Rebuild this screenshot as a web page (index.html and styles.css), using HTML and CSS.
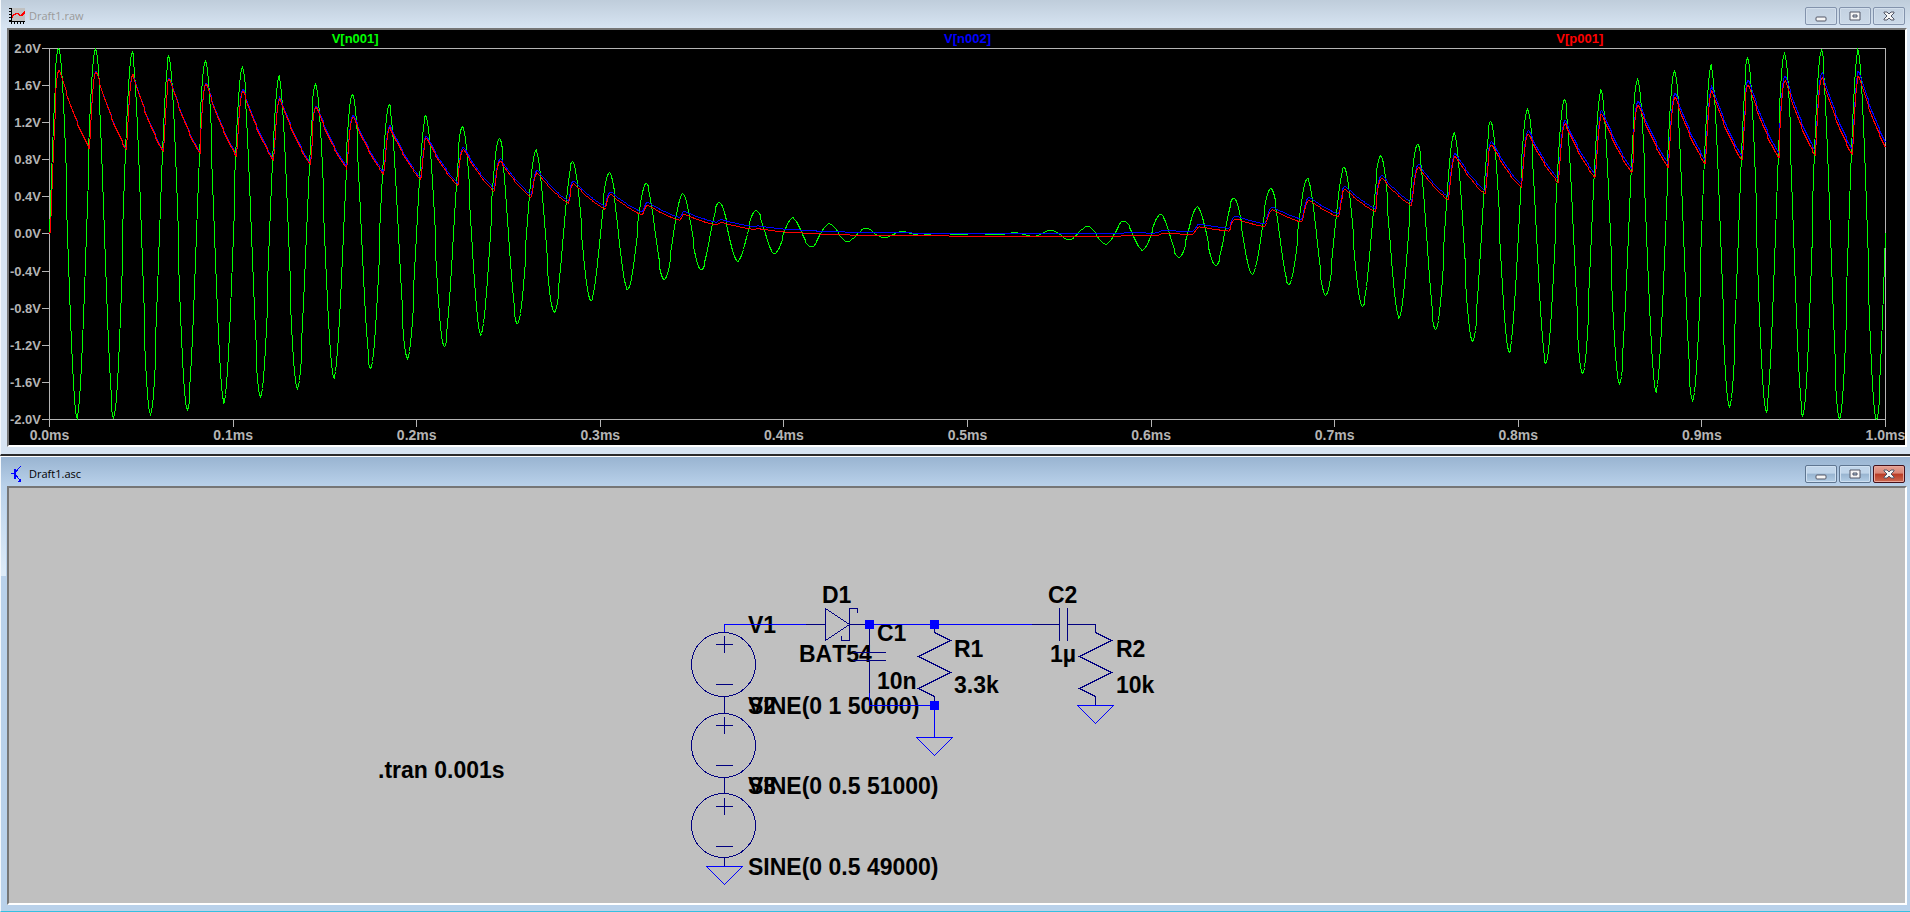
FILE: index.html
```html
<!DOCTYPE html>
<html lang="en">
<head>
<meta charset="utf-8">
<title>Draft1</title>
<link rel="stylesheet" href="styles.css">
</head>
<body>
<section class="window window-plot" aria-label="Draft1.raw">
  <header class="titlebar">
    <svg class="app-icon" width="16" height="16" viewBox="0 0 16 16" shape-rendering="crispEdges" aria-hidden="true">
      <path d="M2 0h14v13H2z" fill="#c0c0c0"/>
      <path d="M2 0h1v16H2zM0 13h16v1H0zM0 0h2v1H0zM0 3h2v1H0zM0 6h2v1H0zM0 9h2v1H0zM0 12h2v1H0zM5 14h1v2H5zM8 14h1v2H8zM11 14h1v2h-1zM14 14h1v2h-1z"/>
      <path d="M3 9.500L4 7.500L7 5.500L9 5.500L11 7.500L13 7L16 4" fill="none" stroke="#f00" stroke-width="1.500"/>
    </svg>
    <h1 class="title">Draft1.raw</h1>
    <div class="controls">
      <button class="ctl" type="button" aria-label="Minimize"><svg width="12" height="12" viewBox="0 0 12 12"><rect class="glyph" x="1" y="7" width="10" height="4" rx="1"/></svg></button>
      <button class="ctl" type="button" aria-label="Maximize"><svg width="12" height="12" viewBox="0 0 12 12"><path class="glyph" fill-rule="evenodd" d="M1 2h10v8H1zM4 5v2h4V5z"/></svg></button>
      <button class="ctl" type="button" aria-label="Close"><svg width="12" height="12" viewBox="0 0 12 12"><path class="glyph" d="M1 2h3l2 2 2-2h3v1L8 6l3 3v1H8L6 8l-2 2H1V9l3-3-3-3z"/></svg></button>
    </div>
  </header>
  <div class="client scope">
    <ul class="legend">
      <li class="legend-green">V[n001]</li>
      <li class="legend-blue">V[n002]</li>
      <li class="legend-red">V[p001]</li>
    </ul>
    <ol class="y-axis">
      <li>2.0V</li><li>1.6V</li><li>1.2V</li><li>0.8V</li><li>0.4V</li><li>0.0V</li>
      <li>-0.4V</li><li>-0.8V</li><li>-1.2V</li><li>-1.6V</li><li>-2.0V</li>
    </ol>
    <div class="plot" id="plot">
      <svg class="traces" role="img" aria-label="Node voltages over time">
        <path class="trace trace-green" id="trace-n001"/>
        <path class="trace trace-blue" id="trace-n002"/>
        <path class="trace trace-red" id="trace-p001"/>
      </svg>
    </div>
    <ol class="x-axis">
      <li>0.0ms</li><li>0.1ms</li><li>0.2ms</li><li>0.3ms</li><li>0.4ms</li><li>0.5ms</li>
      <li>0.6ms</li><li>0.7ms</li><li>0.8ms</li><li>0.9ms</li><li>1.0ms</li>
    </ol>
  </div>
</section>

<section class="window window-schematic" aria-label="Draft1.asc">
  <header class="titlebar">
    <svg class="app-icon" width="16" height="16" viewBox="0 0 16 16" shape-rendering="crispEdges" aria-hidden="true">
      <path d="M5 3h2v10H5z" fill="#00f"/>
      <path d="M2 7.500H5M7 5.500L11.500 0.500M7 9.500L12 15" fill="none" stroke="#00f"/>
      <path d="M12 12v4H9v-1l1-1z" fill="#00f"/>
    </svg>
    <h1 class="title">Draft1.asc</h1>
    <div class="controls">
      <button class="ctl" type="button" aria-label="Minimize"><svg width="12" height="12" viewBox="0 0 12 12"><rect class="glyph" x="1" y="7" width="10" height="4" rx="1"/></svg></button>
      <button class="ctl" type="button" aria-label="Maximize"><svg width="12" height="12" viewBox="0 0 12 12"><path class="glyph" fill-rule="evenodd" d="M1 2h10v8H1zM4 5v2h4V5z"/></svg></button>
      <button class="ctl ctl-close" type="button" aria-label="Close"><svg width="12" height="12" viewBox="0 0 12 12"><path class="glyph" d="M1 2h3l2 2 2-2h3v1L8 6l3 3v1H8L6 8l-2 2H1V9l3-3-3-3z"/></svg></button>
    </div>
  </header>
  <div class="client sheet">
    <svg class="schematic" role="img" aria-label="Envelope detector schematic">
      <g class="labels">
        <text x="813" y="115">D1</text>
        <text x="739" y="145">V1</text>
        <text x="790" y="174">BAT54</text>
        <text x="868" y="153">C1</text>
        <text x="868" y="201">10n</text>
        <text x="945" y="169">R1</text>
        <text x="945" y="205">3.3k</text>
        <text x="1039" y="115">C2</text>
        <text x="1041" y="174">1µ</text>
        <text x="1107" y="169">R2</text>
        <text x="1107" y="205">10k</text>
        <text x="739" y="226">V2</text>
        <text x="739" y="226">SINE(0 1 50000)</text>
        <text x="739" y="306">V3</text>
        <text x="739" y="306">SINE(0 0.5 51000)</text>
        <text x="739" y="387">SINE(0 0.5 49000)</text>
        <text x="369" y="290">.tran 0.001s</text>
      </g>
      <g class="part">
        <!-- voltage sources -->
        <path d="M715.500 136V144.500M715.500 208.500V225.500M715.500 289V305.500M715.500 369.500V378.500"/>
        <circle cx="714.500" cy="176.500" r="32"/>
        <circle cx="714.500" cy="257.500" r="32"/>
        <circle cx="714.500" cy="337.500" r="32"/>
        <path d="M707 156.500H724M715.500 148V165M707 196.500H724"/>
        <path d="M707 237.500H724M715.500 229V246M707 277.500H724"/>
        <path d="M707 318.500H724M715.500 310V327M707 358.500H724"/>
        <!-- Schottky diode -->
        <path d="M797 136.500H816.500M816.500 120.500V152.500L840.500 136.500ZM848.500 125V120.500H840.500V152.500H832.500V148M840.500 136.500H856"/>
        <!-- C1 -->
        <path d="M860.500 141V164.500M844 164.500H877M844 172.500H877M860.500 172.500V205"/>
        <!-- R1 -->
        <path d="M925.500 141V144.500L941.500 152.500L909.500 168.500L941.500 184.500L909.500 200.500L925.500 208.500V213"/>
        <!-- C2 -->
        <path d="M1023 136.500H1050.500M1050.500 120V153M1058.500 120V153M1058.500 136.500H1086.500"/>
        <!-- R2 -->
        <path d="M1086.500 136.500V144.500L1102.500 152.500L1070.500 168.500L1102.500 184.500L1070.500 200.500L1086.500 208.500V217.500"/>
      </g>
      <g class="wire">
        <path d="M715.500 144V136.500H797M856 136.500H1023M860.500 205V217.500H925.500V249.500"/>
        <path d="M697.500 378.500H733.500L715.500 396.500Z"/>
        <path d="M907.500 249.500H943.500L925.500 267.500Z"/>
        <path d="M1068.500 217.500H1104.500L1086.500 235.500Z"/>
      </g>
      <g class="node">
        <rect x="856" y="132" width="9" height="9"/>
        <rect x="921" y="132" width="9" height="9"/>
        <rect x="921" y="213" width="9" height="9"/>
      </g>
    </svg>
  </div>
</section>
<script src="traces.js"></script>
</body>
</html>
```

FILE: styles.css
```css
* {
  box-sizing: border-box;
}

body {
  margin: 0;
  height: 100vh;
  display: grid;
  grid-template-rows: minmax(0, 1fr) minmax(0, 1fr);
  overflow: hidden;
  background: #d7e4f2;
  font-family: "Liberation Sans", Arial, sans-serif;
}

.window {
  min-height: 0;
  display: flex;
  flex-direction: column;
  border-left: 1px solid #f4f8fc;
}

.window-plot {
  padding: 0 3px 7px 6px;
  border-bottom: 2px solid #2b2b2b;
  background: linear-gradient(#bfcddb, #d7e4f2 28px);
}

.window-schematic {
  padding: 0 3px 6px 6px;
  border-top: 1px solid #fff;
  border-bottom: 1px solid #36bfe0;
  background:
    linear-gradient(#b9d1ea, #dfecf8) 0 29px / 5px 90px no-repeat,
    linear-gradient(#99b4d1, #b9d1ea 29px);
}

.titlebar {
  flex: none;
  display: flex;
  align-items: center;
  height: 28px;
  padding: 4px 2px 0;
}

.window-schematic .titlebar {
  height: 29px;
  padding-top: 5px;
}

.app-icon {
  flex: none;
}

.title {
  flex: 1;
  margin: 0 0 0 4px;
  font: 400 11px/16px "Open Sans", "Noto Sans", sans-serif;
  color: #000;
}

.window-plot .title {
  color: #9a9a9a;
}

.controls {
  display: flex;
  gap: 2px;
}

.ctl {
  display: flex;
  align-items: center;
  justify-content: center;
  width: 32px;
  height: 18px;
  padding: 0;
  border: 1px solid #8393ac;
  border-radius: 2px;
  background: linear-gradient(#c3d1e1, #cbd9e8);
  box-shadow: inset 0 0 0 1px #d3dfec;
}

.window-schematic .ctl {
  border-color: #5f7691;
  background: linear-gradient(#c0d5ea 45%, #98b4d0 50%, #b4cee6);
  box-shadow: inset 0 0 0 1px #cfe0f1;
}

.window-schematic .ctl-close {
  border-color: #43101a;
  background: linear-gradient(#e5a194, #d98677 45%, #b83a25 50%, #cc6a52);
  box-shadow: inset 0 0 0 1px #e9a79b;
}

.glyph {
  fill: #f6f6f6;
  stroke: #535666;
  stroke-width: 1;
}

.client {
  flex: 1;
  min-height: 0;
  border: 2px solid;
  border-color: #767676 #fff #fff #767676;
}

.scope {
  display: grid;
  grid-template: 18px minmax(0, 1fr) 25px / 40px minmax(0, 1fr) 19px;
  background: #000;
  color: #b4b4b4;
  font-size: 13px;
  font-weight: 700;
}

.legend,
.y-axis,
.x-axis {
  margin: 0;
  padding: 0;
  list-style: none;
}

.legend {
  grid-area: 1 / 2;
  display: flex;
  line-height: 18px;
}

.legend li {
  flex: 1;
  text-align: center;
}

.legend-green {
  color: #0f0;
}

.legend-blue {
  color: #00f;
}

.legend-red {
  color: #f00;
}

.y-axis {
  grid-area: 2 / 1;
  display: flex;
  flex-direction: column;
  justify-content: space-between;
}

.y-axis li {
  display: flex;
  align-items: center;
  justify-content: flex-end;
  height: 1px;
}

.y-axis li::after {
  content: "";
  width: 7px;
  height: 1px;
  margin-left: 1px;
  background: #b4b4b4;
}

.plot {
  grid-area: 2 / 2;
  box-shadow: inset 0 0 0 1px #b4b4b4;
}

.traces {
  display: block;
  width: 100%;
  height: 100%;
}

.trace {
  fill: none;
  stroke-width: 1;
  shape-rendering: crispEdges;
}

.trace-green {
  stroke: #0f0;
}

.trace-blue {
  stroke: #00f;
}

.trace-red {
  stroke: #f00;
}

.x-axis {
  grid-area: 3 / 2;
  display: flex;
  justify-content: space-between;
}

.x-axis li {
  display: flex;
  flex-direction: column;
  align-items: center;
  width: 1px;
  line-height: 15px;
  font-size: 14px;
  white-space: nowrap;
}

.x-axis li::before {
  content: "";
  width: 1px;
  height: 7px;
  margin-bottom: 1px;
  background: #b4b4b4;
}

.sheet {
  background: #c0c0c0;
}

.schematic {
  display: block;
  width: 100%;
  height: 100%;
}

.labels {
  font-size: 23px;
  font-weight: 700;
  font-kerning: none;
  fill: #000;
}

.part,
.wire {
  fill: none;
  stroke: #000080;
  stroke-width: 1;
  shape-rendering: crispEdges;
}

.wire {
  stroke: #00f;
}

.node {
  fill: #00f;
}
```

FILE: traces.js
```js
// Transient analysis of the envelope detector: three series sine sources,
// Schottky diode, C1 || R1, then C2 in series with R2.
const SPAN = 0.001;
const STEP = 2e-8;
const EVERY = 25;
const C1 = 10e-9, R1 = 3300, C2 = 1e-6, R2 = 10000;
const IS = 1e-7, VT = 0.02585;

function source(t) {
  const w = 2 * Math.PI * t;
  return Math.sin(w * 50000) + 0.5 * Math.sin(w * 51000) + 0.5 * Math.sin(w * 49000);
}

function simulate() {
  const rows = [[0, 0, 0, 0]];
  const steps = Math.round(SPAN / STEP);
  let v = 0, u = 0;
  for (let i = 1; i <= steps; i++) {
    const t = i * STEP;
    const vin = source(t);
    const prev = v;
    for (let k = 0; k < 8; k++) {
      const e = Math.exp(Math.min((vin - v) / VT, 25));
      const f = C1 * (v - prev) / STEP - IS * (e - 1) + v / R1 + (v - u) / R2;
      const df = C1 / STEP + IS * e / VT + 1 / R1 + 1 / R2;
      v -= f / df;
    }
    u += STEP * (v - u) / (R2 * C2);
    if (i % EVERY === 0) rows.push([t, vin, v, v - u]);
  }
  return rows;
}

const rows = simulate();
const plot = document.getElementById("plot");

function draw() {
  const w = plot.clientWidth - 1;
  const h = plot.clientHeight - 1;
  ["trace-n001", "trace-n002", "trace-p001"].forEach((id, n) => {
    const d = rows.map(r => {
      const x = Math.round(r[0] / SPAN * w) + 0.5;
      const y = Math.round((1 - r[n + 1] / 2) * h / 2) + 0.5;
      return x + " " + y;
    });
    document.getElementById(id).setAttribute("d", "M" + d.join("L"));
  });
}

draw();
window.addEventListener("resize", draw);
```
